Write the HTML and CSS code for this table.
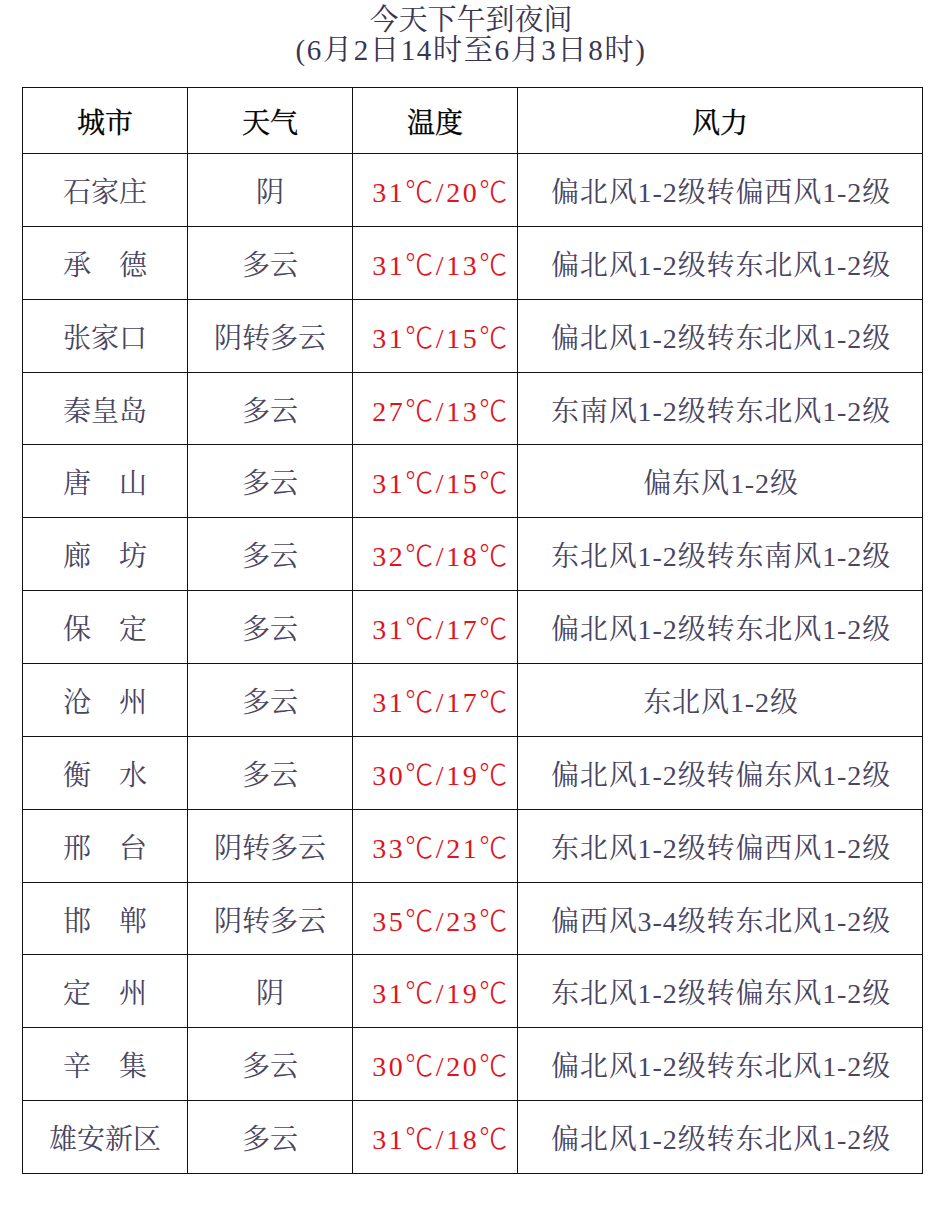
FILE: index.html
```html
<!DOCTYPE html>
<html lang="zh-CN">
<head>
<meta charset="utf-8">
<title>今天下午到夜间</title>
<link rel="stylesheet" href="styles.css">
</head>
<body>
<div class="page">
  <h1 class="title">
    <span class="line">今天下午到夜间</span>
    <span class="line sub">(6月2日14时至6月3日8时)</span>
  </h1>
  <table class="wx">
    <colgroup>
      <col class="c1"><col class="c2"><col class="c3"><col class="c4">
    </colgroup>
    <thead>
      <tr><th>城市</th><th>天气</th><th>温度</th><th>风力</th></tr>
    </thead>
    <tbody>
      <tr><td>石家庄</td><td>阴</td><td class="t">31<span class="u">℃</span>/20<span class="u">℃</span></td><td class="w">偏北风1-2级转偏西风1-2级</td></tr>
      <tr><td>承　德</td><td>多云</td><td class="t">31<span class="u">℃</span>/13<span class="u">℃</span></td><td class="w">偏北风1-2级转东北风1-2级</td></tr>
      <tr><td>张家口</td><td>阴转多云</td><td class="t">31<span class="u">℃</span>/15<span class="u">℃</span></td><td class="w">偏北风1-2级转东北风1-2级</td></tr>
      <tr><td>秦皇岛</td><td>多云</td><td class="t">27<span class="u">℃</span>/13<span class="u">℃</span></td><td class="w">东南风1-2级转东北风1-2级</td></tr>
      <tr><td>唐　山</td><td>多云</td><td class="t">31<span class="u">℃</span>/15<span class="u">℃</span></td><td class="w">偏东风1-2级</td></tr>
      <tr><td>廊　坊</td><td>多云</td><td class="t">32<span class="u">℃</span>/18<span class="u">℃</span></td><td class="w">东北风1-2级转东南风1-2级</td></tr>
      <tr><td>保　定</td><td>多云</td><td class="t">31<span class="u">℃</span>/17<span class="u">℃</span></td><td class="w">偏北风1-2级转东北风1-2级</td></tr>
      <tr><td>沧　州</td><td>多云</td><td class="t">31<span class="u">℃</span>/17<span class="u">℃</span></td><td class="w">东北风1-2级</td></tr>
      <tr><td>衡　水</td><td>多云</td><td class="t">30<span class="u">℃</span>/19<span class="u">℃</span></td><td class="w">偏北风1-2级转偏东风1-2级</td></tr>
      <tr><td>邢　台</td><td>阴转多云</td><td class="t">33<span class="u">℃</span>/21<span class="u">℃</span></td><td class="w">东北风1-2级转偏西风1-2级</td></tr>
      <tr><td>邯　郸</td><td>阴转多云</td><td class="t">35<span class="u">℃</span>/23<span class="u">℃</span></td><td class="w">偏西风3-4级转东北风1-2级</td></tr>
      <tr><td>定　州</td><td>阴</td><td class="t">31<span class="u">℃</span>/19<span class="u">℃</span></td><td class="w">东北风1-2级转偏东风1-2级</td></tr>
      <tr><td>辛　集</td><td>多云</td><td class="t">30<span class="u">℃</span>/20<span class="u">℃</span></td><td class="w">偏北风1-2级转东北风1-2级</td></tr>
      <tr><td>雄安新区</td><td>多云</td><td class="t">31<span class="u">℃</span>/18<span class="u">℃</span></td><td class="w">偏北风1-2级转东北风1-2级</td></tr>
    </tbody>
  </table>
</div>
</body>
</html>
```

FILE: styles.css
```css
html, body {
  margin: 0;
  padding: 0;
  background: #fff;
}
body {
  font-family: "Liberation Serif", "Noto Serif CJK SC", "Noto Sans CJK SC", serif;
}
.page {
  width: 942px;
  padding-top: 5px;
}
.title {
  margin: 0;
  font-weight: normal;
  font-size: 29px;
  line-height: 30px;
  color: #3b3550;
  text-align: center;
}
.title .line {
  display: block;
}
.title .sub {
  letter-spacing: 1.7px;
}
.wx {
  margin: 22px 0 0 22px;
  width: 900px;
  border-collapse: collapse;
  table-layout: fixed;
}
.c1, .c2, .c3 { width: 165px; }
.c4 { width: 405px; }
.wx th, .wx td {
  border: 1px solid #111;
  text-align: center;
  padding: 0;
  font-size: 28px;
  white-space: nowrap;
}
.wx th {
  height: 65px;
  color: #000;
  font-weight: normal;
  -webkit-text-stroke: 0.35px #000;
}
.wx td {
  height: 71.86px;
  color: #4a4560;
}
.wx td.t {
  color: #e0141e;
  letter-spacing: 2.5px;
  padding-left: 12px;
}
.wx td.w {
  letter-spacing: 0.9px;
  padding-left: 2px;
}
.u {
  font-family: "Noto Sans CJK SC", sans-serif;
  font-weight: 300;
}
```
